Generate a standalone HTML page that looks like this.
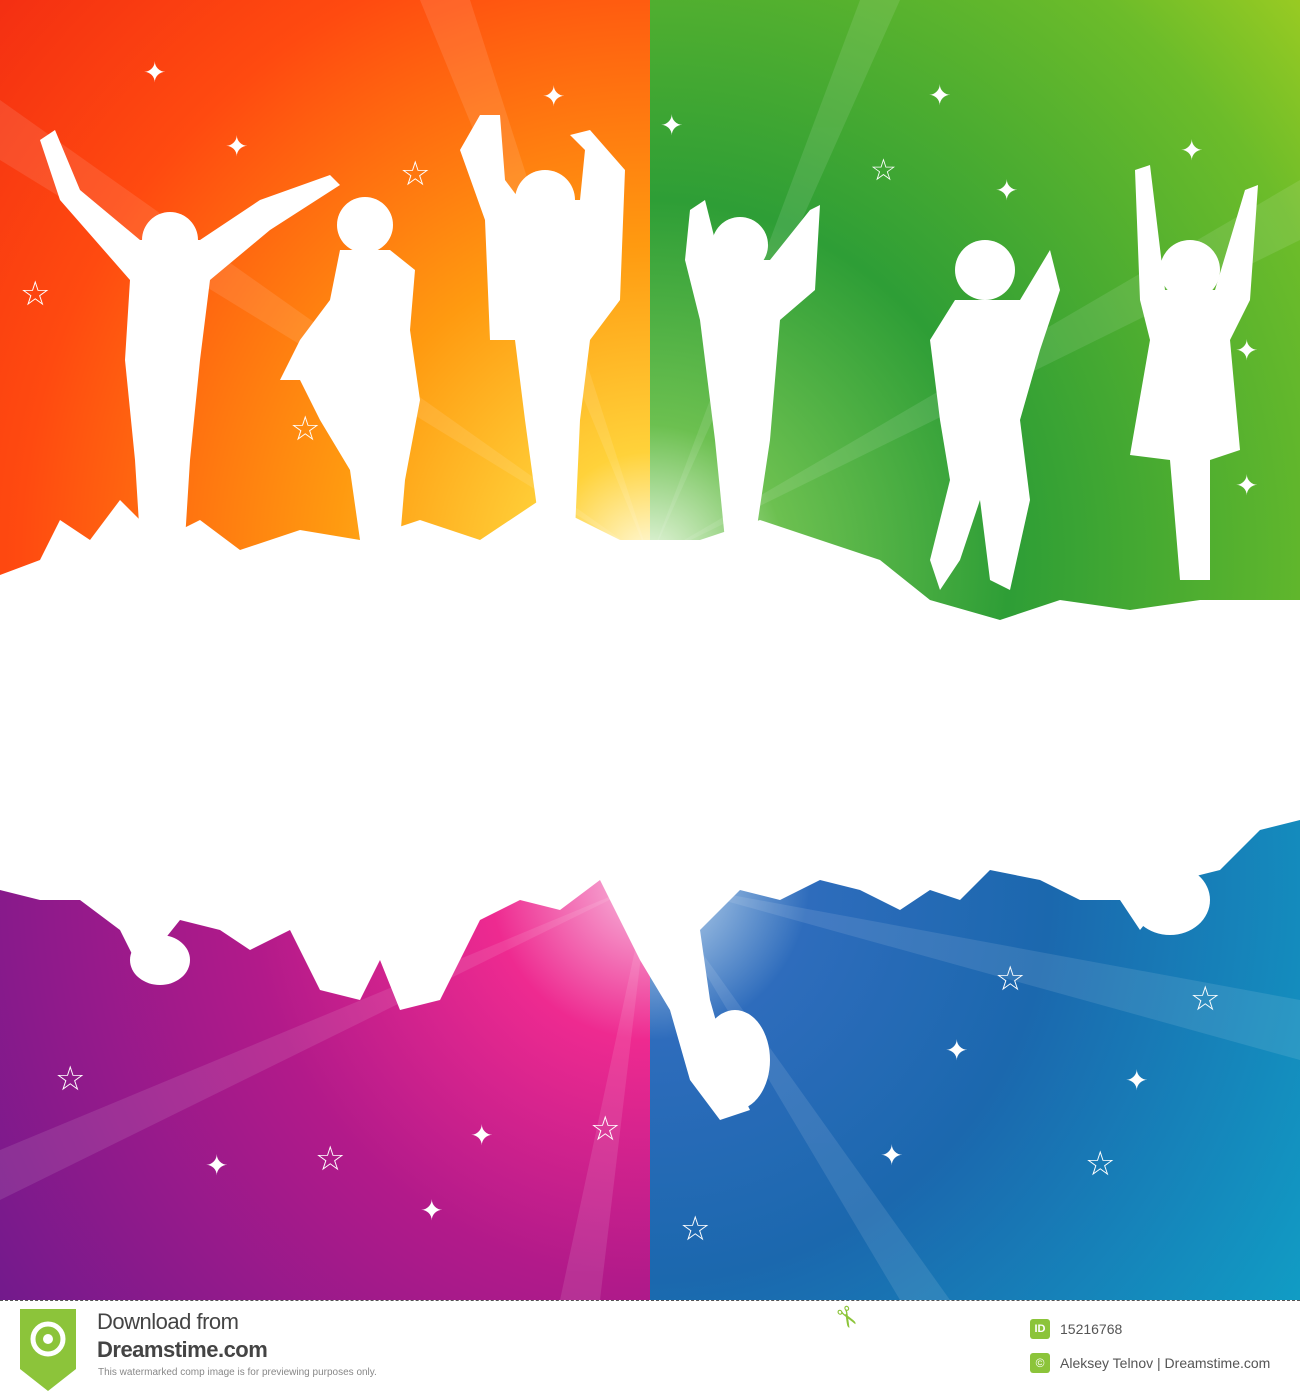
<!DOCTYPE html>
<html><head><meta charset="utf-8"><style>
body{margin:0;width:1300px;height:1390px;background:#fff;overflow:hidden;font-family:"Liberation Sans",sans-serif}
svg{display:block}
.ft{position:absolute;top:1300px;left:0;width:1300px;height:90px;background:#fff;border-top:1px dashed #555}
</style></head><body>
<svg width="1300" height="1300" viewBox="0 0 1300 1300">
<defs>
<radialGradient id="tl" cx="650" cy="560" r="900" gradientUnits="userSpaceOnUse">
<stop offset="0" stop-color="#fffbe0"/><stop offset="0.12" stop-color="#ffd23a"/><stop offset="0.35" stop-color="#ff9a10"/><stop offset="0.7" stop-color="#ff4a10"/><stop offset="1" stop-color="#f22a12"/></radialGradient>
<radialGradient id="tr" cx="650" cy="560" r="900" gradientUnits="userSpaceOnUse">
<stop offset="0" stop-color="#e8f6e0"/><stop offset="0.15" stop-color="#6cc050"/><stop offset="0.4" stop-color="#2e9e36"/><stop offset="0.8" stop-color="#6cbc2a"/><stop offset="1" stop-color="#a6cf20"/></radialGradient>
<radialGradient id="bl" cx="650" cy="880" r="800" gradientUnits="userSpaceOnUse">
<stop offset="0" stop-color="#f8c0e0"/><stop offset="0.2" stop-color="#ee2a90"/><stop offset="0.5" stop-color="#b21a8a"/><stop offset="1" stop-color="#6e1a8c"/></radialGradient>
<radialGradient id="br" cx="650" cy="880" r="800" gradientUnits="userSpaceOnUse">
<stop offset="0" stop-color="#d0e4f4"/><stop offset="0.2" stop-color="#2e6cbc"/><stop offset="0.5" stop-color="#1b68ae"/><stop offset="1" stop-color="#10a0c6"/></radialGradient>
</defs>
<rect x="0" y="0" width="650" height="650" fill="url(#tl)"/>
<rect x="650" y="0" width="650" height="650" fill="url(#tr)"/>
<rect x="0" y="650" width="650" height="650" fill="url(#bl)"/>
<rect x="650" y="650" width="650" height="650" fill="url(#br)"/>
<g fill="#fff" opacity="0.1">
<polygon points="650,560 420,0 470,0"/><polygon points="650,560 0,100 0,160"/><polygon points="650,560 860,0 900,0"/><polygon points="650,560 1300,180 1300,240"/>
<polygon points="650,880 560,1300 600,1300"/><polygon points="650,880 0,1150 0,1200"/><polygon points="650,880 900,1300 950,1300"/><polygon points="650,880 1300,1000 1300,1060"/>
</g>
<!-- white band -->
<path fill="#fff" d="M0,575 L40,560 60,520 90,540 120,500 160,540 200,520 240,550 300,530 360,540 420,520 480,540 540,500 620,540 700,540 760,520 820,540 880,560 930,600 1000,620 1060,600 1130,610 1200,600 1300,600 L1300,820 1260,830 1220,870 1180,880 1140,930 1120,900 1080,900 1040,880 990,870 960,900 930,890 900,910 860,890 820,880 780,900 740,890 700,930 710,1000 730,1070 750,1110 720,1120 690,1080 670,1010 640,960 600,880 560,910 520,900 480,920 440,1000 400,1010 380,960 360,1000 320,990 290,930 250,950 220,930 180,920 140,970 120,930 80,900 40,900 0,890 Z"/>
<ellipse cx="735" cy="1060" rx="35" ry="50" fill="#fff"/>
<ellipse cx="1170" cy="900" rx="40" ry="35" fill="#fff"/>
<ellipse cx="160" cy="960" rx="30" ry="25" fill="#fff"/>
<!-- silhouettes -->
<g fill="#fff">
<circle cx="170" cy="240" r="28"/><path d="M40,140 L55,130 80,190 140,240 200,240 260,200 330,175 340,185 270,230 210,280 200,360 190,460 185,540 140,540 135,460 125,360 130,280 60,200 Z"/>
<circle cx="365" cy="225" r="28"/><path d="M340,250 L390,250 415,270 410,330 420,400 405,480 400,540 360,540 350,470 320,420 300,380 280,380 300,340 330,300 Z"/>
<circle cx="545" cy="200" r="30"/><path d="M480,115 L500,115 505,180 520,200 580,200 585,150 570,135 590,130 625,170 620,300 590,340 580,420 575,530 540,530 525,420 515,340 490,340 485,220 460,150 Z"/>
<circle cx="740" cy="245" r="28"/><path d="M690,210 L705,200 720,260 770,260 810,210 820,205 815,290 780,320 770,440 755,540 725,540 715,440 700,320 685,260 Z"/>
<circle cx="985" cy="270" r="30"/><path d="M955,300 L1020,300 1050,250 1060,290 1040,350 1020,420 1030,500 1010,590 990,580 980,500 960,560 940,590 930,560 950,480 940,420 930,340 Z"/>
<circle cx="1190" cy="270" r="30"/><path d="M1135,170 L1150,165 1165,290 1215,290 1245,190 1258,185 1250,300 1230,340 1240,450 1210,460 1210,580 1180,580 1170,460 1130,455 1150,340 1140,300 Z"/>
</g>
<g fill="#fff" font-size="28" font-family="DejaVu Sans,sans-serif">
<text x="143" y="82">✦</text><text x="542" y="106">✦</text><text x="225" y="156">✦</text><text x="928" y="105">✦</text><text x="1180" y="160">✦</text><text x="1235" y="360">✦</text><text x="205" y="1175">✦</text><text x="420" y="1220">✦</text><text x="880" y="1165">✦</text><text x="945" y="1060">✦</text><text x="1125" y="1090">✦</text><text x="470" y="1145">✦</text><text x="995" y="200">✦</text><text x="660" y="135">✦</text><text x="1235" y="495">✦</text>
<text x="20" y="305" font-size="34">☆</text><text x="400" y="185" font-size="34">☆</text><text x="290" y="440" font-size="34">☆</text><text x="870" y="180" font-size="30">☆</text><text x="55" y="1090" font-size="34">☆</text><text x="590" y="1140" font-size="34">☆</text><text x="315" y="1170" font-size="34">☆</text><text x="995" y="990" font-size="34">☆</text><text x="1190" y="1010" font-size="34">☆</text><text x="1085" y="1175" font-size="34">☆</text><text x="680" y="1240" font-size="34">☆</text>
</g>
</svg>
<div class="ft">
<svg style="position:absolute;left:20px;top:8px" width="56" height="82"><path d="M0,0 H56 V60 L28,82 L0,60 Z" fill="#8cc43a"/><circle cx="28" cy="30" r="15" fill="none" stroke="#fff" stroke-width="5"/><circle cx="28" cy="30" r="5" fill="#fff"/></svg>
<div style="position:absolute;left:97px;top:8px;font-size:22px;color:#444;letter-spacing:-0.5px">Download from</div>
<div style="position:absolute;left:97px;top:36px;font-size:22px;font-weight:bold;color:#444;letter-spacing:-0.5px">Dreamstime.com</div>
<div style="position:absolute;left:98px;top:66px;font-size:10px;color:#888">This watermarked comp image is for previewing purposes only.</div>
<div style="position:absolute;left:1030px;top:18px;width:20px;height:20px;background:#8cc43a;border-radius:3px;color:#fff;font-size:11px;font-weight:bold;text-align:center;line-height:20px">ID</div>
<div style="position:absolute;left:1060px;top:20px;font-size:14px;color:#555">15216768</div>
<div style="position:absolute;left:1030px;top:52px;width:20px;height:20px;background:#8cc43a;border-radius:3px;color:#fff;font-size:12px;text-align:center;line-height:20px">©</div>
<div style="position:absolute;left:1060px;top:54px;font-size:14px;color:#555">Aleksey Telnov | Dreamstime.com</div>
<div style="position:absolute;left:835px;top:0;font-size:28px;color:#8cc43a;transform:rotate(60deg)">✂</div>
</div>
</body></html>
